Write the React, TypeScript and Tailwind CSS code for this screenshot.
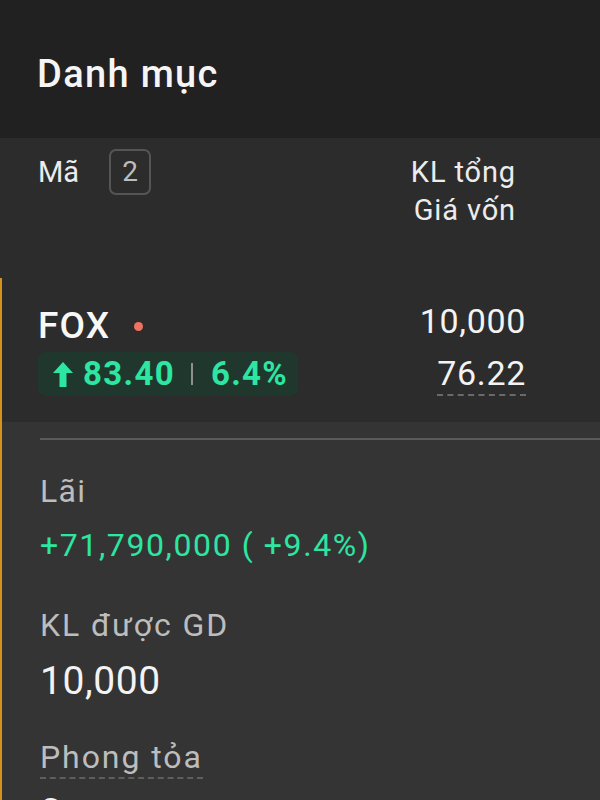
import React from "react";

export default function App() {
  return (
    <div
      className="w-[600px] h-[800px] overflow-hidden bg-[#2c2c2c] text-white"
      style={{ fontFamily: "Roboto, 'Noto Sans', sans-serif" }}
    >
      <div className="h-[138px] bg-[#212121] flex items-center pl-[37px] pt-[10px]">
        <span className="text-[38px] font-medium tracking-[0.035em] text-[#f5f5f5]">Danh mục</span>
      </div>

      <div className="h-[140px] flex justify-between pl-[38px] pr-[84px] pt-[15px]">
        <div className="flex items-center h-[38px] gap-[30px]">
          <span className="text-[29px] leading-[38px] text-[#ececec]">Mã</span>
          <div className="w-[42px] h-[46px] rounded-[7px] border-2 border-[#555555] flex items-center justify-center text-[28px] text-[#bdbdbd]">
            2
          </div>
        </div>
        <div className="flex flex-col items-end text-[29px] leading-[38px] text-[#ececec] tracking-[0.03em]">
          <span>KL tổng</span>
          <span>Giá vốn</span>
        </div>
      </div>

      <div className="border-l-[2px] border-[#d4941c]">
        <div className="h-[144px] flex justify-between pl-[36px] pr-[74px]">
          <div className="flex flex-col pt-[26px]">
            <div className="flex items-center h-[44px]">
              <span className="text-[37px] font-medium leading-[44px] tracking-[0.03em] text-[#f7f7f7]">FOX</span>
              <span className="ml-[24px] w-[9px] h-[9px] rounded-full bg-[#ee7462]" />
            </div>
            <div className="mt-[4px] h-[44px] w-[260px] rounded-[8px] bg-[#20372e] flex items-center pl-[15px] text-[#2ce6a2]">
              <svg width="20" height="25" viewBox="0 0 20 25" className="mr-[10px]">
                <path d="M10 0 L20 11 L13.5 11 L13.5 25 L6.5 25 L6.5 11 L0 11 Z" fill="#2ce6a2" />
              </svg>
              <span className="text-[33px] font-bold leading-[44px] tracking-[0.04em]">83.40</span>
              <span className="ml-[16px] w-[2px] h-[22px] bg-[#8f8f8f]" />
              <span className="ml-[18px] text-[33px] font-bold leading-[44px] tracking-[0.04em]">6.4%</span>
            </div>
          </div>
          <div className="flex flex-col items-end pt-[21px] text-[34px] text-[#f3f3f3] tracking-[0.02em]">
            <span className="leading-[44px]">10,000</span>
            <span className="mt-[9px] leading-[42px] border-b-2 border-dashed border-[#6a6a6a]">76.22</span>
          </div>
        </div>

        <div className="bg-[#343434] pt-[16px] pb-[40px]">
          <div className="ml-[38px] h-[2px] bg-[#5a5a5a]" />
          <div className="pl-[38px] flex flex-col items-start">
            <span className="mt-[31px] text-[32px] leading-[40px] text-[#bdbdbd] tracking-[0.04em]">Lãi</span>
            <span className="mt-[12px] text-[32px] leading-[44px] text-[#2ce6a2] tracking-[0.05em]">
              +71,790,000 ( +9.4%)
            </span>
            <span className="mt-[38px] text-[32px] leading-[40px] text-[#bdbdbd] tracking-[0.06em]">KL được GD</span>
            <span className="mt-[12px] text-[39px] leading-[48px] text-[#f3f3f3] tracking-[0.015em]">10,000</span>
            <span className="mt-[32px] text-[32px] leading-[40px] text-[#bdbdbd] tracking-[0.06em] border-b-2 border-dashed border-[#5e5e5e]">
              Phong tỏa
            </span>
            <span className="mt-[10px] text-[39px] leading-[48px] text-[#f3f3f3]">0</span>
          </div>
        </div>
      </div>
    </div>
  );
}
